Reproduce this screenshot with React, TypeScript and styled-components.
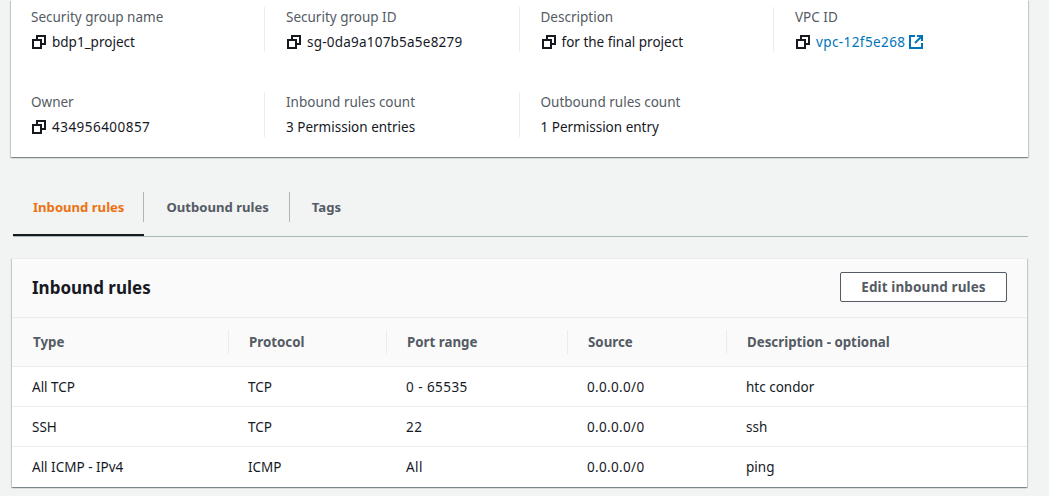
import React from 'react';
import styled, {createGlobalStyle} from "styled-components";

type Detail = {
  label: string;
  value: string;
  copy?: boolean;
  link?: boolean;
  spacing?: number;
}

const details: Detail[] = [
  {label: "Security group name", value: "bdp1_project", copy: true},
  {label: "Security group ID", value: "sg-0da9a107b5a5e8279", copy: true, spacing: 0.22},
  {label: "Description", value: "for the final project", copy: true},
  {label: "VPC ID", value: "vpc-12f5e268", copy: true, link: true, spacing: 0.4},
  {label: "Owner", value: "434956400857", copy: true, spacing: 0.47},
  {label: "Inbound rules count", value: "3 Permission entries"},
  {label: "Outbound rules count", value: "1 Permission entry"},
];

const columns = [
  {title: "Type", width: 216},
  {title: "Protocol", width: 158},
  {title: "Port range", width: 181, spacing: 0.45},
  {title: "Source", width: 159, spacing: 0.33},
  {title: "Description - optional", width: 301},
];

const rules = [
  ["All TCP", "TCP", "0 - 65535", "0.0.0.0/0", "htc condor"],
  ["SSH", "TCP", "22", "0.0.0.0/0", "ssh"],
  ["All ICMP - IPv4", "ICMP", "All", "0.0.0.0/0", "ping"],
];

const tabs = ["Inbound rules", "Outbound rules", "Tags"];

const GlobalStyle = createGlobalStyle`
    html, body {
        margin: 0;
        padding: 0;
        background: #f2f3f3;
        font-family: "Noto Sans", "Open Sans", sans-serif;
        font-size: 13.5px;
        color: #16191f;
        overflow: hidden;
    }
`

const Page = styled.div`
    width: 1049px;
    height: 496px;
    padding-left: 11px;
    box-sizing: border-box;
`

const DetailsCard = styled.section`
    width: 1017px;
    height: 157px;
    box-sizing: border-box;
    background: #fff;
    padding-top: 7px;
    box-shadow: 0 1px 1px 0 rgba(0, 28, 36, 0.3), 1px 1px 1px 0 rgba(0, 28, 36, 0.15), -1px 1px 1px 0 rgba(0, 28, 36, 0.15);
    display: grid;
    grid-template-columns: 253px 254.5px 254.5px 254.5px;
    grid-auto-rows: 45px;
    row-gap: 40px;
`

const DetailCell = styled.div`
    padding-left: 21px;
    border-left: 1px solid #eaeded;
    &:nth-child(4n + 1) {
        padding-left: 20px;
        border-left: none;
    }
`

const Label = styled.div`
    color: #545b64;
    line-height: 20px;
    white-space: nowrap;
`

const Value = styled.div`
    display: flex;
    align-items: center;
    height: 20px;
    margin-top: 5px;
    white-space: nowrap;
`

const Text = styled.span<{ $spacing?: number }>`
    letter-spacing: ${p => p.$spacing || 0}px;
`

const CopyIcon = styled.svg`
    width: 14px;
    height: 14px;
    margin: 0 6px 0 1px;
    flex: none;
`

const Link = styled.a`
    color: #0073bb;
`

const ExternalIcon = styled.svg`
    width: 14px;
    height: 14px;
    margin-left: 4px;
    flex: none;
`

const Tabs = styled.nav`
    display: flex;
    width: 1015px;
    height: 44px;
    margin: 35px 0 0 2px;
    border-bottom: 1px solid #aab7b8;
`

const Tab = styled.div<{ $active?: boolean }>`
    position: relative;
    height: 44px;
    padding: 0 21px 0 22px;
    line-height: 30px;
    box-sizing: border-box;
    font-size: 13.1px;
    font-weight: 700;
    color: ${p => p.$active ? "#ec7211" : "#545b64"};
    border-bottom: 2px solid ${p => p.$active ? "#16191f" : "transparent"};
    &:first-child {
        padding: 0 20px 0 20px;
    }
    &:not(:last-child)::after {
        content: "";
        position: absolute;
        right: 0;
        top: 0;
        width: 1px;
        height: 30px;
        background: #aab7b8;
    }
`

const RulesCard = styled.section`
    width: 1015px;
    height: 229px;
    margin: 21px 0 0 1px;
    background: #fff;
    box-shadow: 0 1px 1px 0 rgba(0, 28, 36, 0.3), 1px 1px 1px 0 rgba(0, 28, 36, 0.15), -1px 1px 1px 0 rgba(0, 28, 36, 0.15);
    border-top: 1px solid #eaeded;
    box-sizing: border-box;
`

const RulesHeader = styled.header`
    height: 59px;
    box-sizing: border-box;
    padding: 13px 20px 0;
    background: #fafafa;
    border-bottom: 1px solid #eaeded;
    display: flex;
    justify-content: space-between;
    align-items: flex-start;
`

const Title = styled.h2`
    margin: 0;
    font-size: 17px;
    line-height: 32px;
    font-weight: 700;
    color: #16191f;
`

const EditButton = styled.button`
    width: 167px;
    height: 30px;
    padding: 0;
    border: 1px solid #545b64;
    border-radius: 2px;
    background: #fff;
    color: #545b64;
    font: 700 13.5px "Noto Sans", sans-serif;
    letter-spacing: 0.1px;
`

const Table = styled.table`
    width: 1015px;
    table-layout: fixed;
    border-collapse: collapse;
`

const HeadCell = styled.th`
    height: 48px;
    padding: 0 0 0 21px;
    background: #fafafa;
    border-bottom: 1px solid #eaeded;
    text-align: left;
    font-size: 13.3px;
    font-weight: 700;
    color: #545b64;
    position: relative;
    &:not(:first-child)::before {
        content: "";
        position: absolute;
        left: 0;
        top: 12px;
        height: 24px;
        width: 1px;
        background: #eaeded;
    }
`

const BodyCell = styled.td<{ $spacing?: number }>`
    height: 39px;
    padding: 0 0 0 20px;
    border-bottom: 1px solid #eaeded;
    letter-spacing: ${p => p.$spacing || 0}px;
    tr:last-child & {
        border-bottom: none;
    }
`

const Copy = () => (
  <CopyIcon viewBox="0 0 14 14" fill="none" stroke="#16191f" strokeWidth="2">
    <rect x="1" y="5" width="8" height="8" />
    <path d="M5 4V1h8v8h-3" />
  </CopyIcon>
);

const External = () => (
  <ExternalIcon viewBox="0 0 14 14" fill="none" stroke="#0073bb" strokeWidth="2">
    <path d="M6 1H1v12h12V8" />
    <path d="M8 1h5v5" />
    <path d="M13 1L6 8" />
  </ExternalIcon>
);

export default function App() {
  return (
    <Page>
      <GlobalStyle />
      <DetailsCard>
        {details.map(d => (
          <DetailCell key={d.label}>
            <Label>{d.label}</Label>
            <Value>
              {d.copy && <Copy />}
              {d.link
                ? <Link><Text $spacing={d.spacing}>{d.value}</Text></Link>
                : <Text $spacing={d.spacing}>{d.value}</Text>}
              {d.link && <External />}
            </Value>
          </DetailCell>
        ))}
      </DetailsCard>
      <Tabs>
        {tabs.map((t, i) => <Tab key={t} $active={i === 0}>{t}</Tab>)}
      </Tabs>
      <RulesCard>
        <RulesHeader>
          <Title>Inbound rules</Title>
          <EditButton>Edit inbound rules</EditButton>
        </RulesHeader>
        <Table>
          <colgroup>
            {columns.map(c => <col key={c.title} width={c.width} />)}
          </colgroup>
          <thead>
            <tr>
              {columns.map(c => <HeadCell key={c.title}>{c.title}</HeadCell>)}
            </tr>
          </thead>
          <tbody>
            {rules.map(r => (
              <tr key={r[0]}>
                {r.map((v, i) => <BodyCell key={i} $spacing={columns[i].spacing}>{v}</BodyCell>)}
              </tr>
            ))}
          </tbody>
        </Table>
      </RulesCard>
    </Page>
  );
}
